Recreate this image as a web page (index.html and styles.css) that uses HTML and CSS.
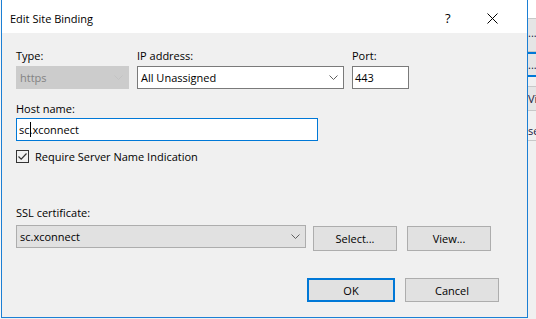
FILE: index.html
```html
<!DOCTYPE html>
<html lang="en">
<head>
    <meta charset="UTF-8">
    <title>Edit Site Binding</title>
    <link rel="stylesheet" href="styles.css">
</head>
<body>
    <div class="screen">
        <div class="edge"></div>

        <!-- Dialog -->
        <div class="dialog">
            <div class="titlebar">
                <span class="title">Edit Site Binding</span>
                <span class="help">?</span>
                <span class="close">
                    <svg width="11" height="11" viewBox="0 0 11 11"><path d="M0.5 0.5 L10.5 10.5 M10.5 0.5 L0.5 10.5" stroke="#000" stroke-width="1" fill="none"/></svg>
                </span>
            </div>

            <div class="content">
                <!-- Type / IP / Port -->
                <div class="top-row">
                    <div class="field">
                        <label class="label">Type:</label>
                        <div class="combo disabled">
                            <span>https</span>
                            <svg class="chev" width="9" height="5" viewBox="0 0 9 5"><path d="M0.5 0.5 L4.5 4.5 L8.5 0.5" stroke="#c3c3c3" fill="none"/></svg>
                        </div>
                    </div>
                    <div class="field">
                        <label class="label">IP address:</label>
                        <div class="combo">
                            <span>All Unassigned</span>
                            <svg class="chev" width="9" height="5" viewBox="0 0 9 5"><path d="M0.5 0.5 L4.5 4.5 L8.5 0.5" stroke="#5f5f5f" fill="none"/></svg>
                        </div>
                    </div>
                    <div class="field">
                        <label class="label">Port:</label>
                        <div class="textbox">443</div>
                    </div>
                </div>

                <!-- Host name -->
                <div class="host">
                    <label class="label">Host name:</label>
                    <div class="textbox focused">sc<span class="caret"></span>.xconnect</div>
                </div>

                <div class="check-row">
                    <span class="checkbox">
                        <svg width="11" height="11" viewBox="0 0 11 11"><path d="M1.5 5.5 L4.2 8.2 L9.5 2.5" stroke="#333" stroke-width="1.2" fill="none"/></svg>
                    </span>
                    <span>Require Server Name Indication</span>
                </div>

                <!-- SSL certificate -->
                <div class="ssl">
                    <label class="label">SSL certificate:</label>
                    <div class="cert-row">
                        <div class="combo grey">
                            <span>sc.xconnect</span>
                            <svg class="chev" width="9" height="5" viewBox="0 0 9 5"><path d="M0.5 0.5 L4.5 4.5 L8.5 0.5" stroke="#5f5f5f" fill="none"/></svg>
                        </div>
                        <button class="btn btn-select">Select...</button>
                        <button class="btn btn-view">View...</button>
                    </div>
                </div>

                <div class="actions">
                    <button class="btn btn-ok">OK</button>
                    <button class="btn btn-cancel">Cancel</button>
                </div>
            </div>
        </div>

        <!-- Window behind the dialog -->
        <div class="side">
            <div class="side-top"></div>
            <div class="side-btn tall">...</div>
            <div class="side-btn active">...</div>
            <div class="side-btn blank"></div>
            <div class="side-btn">Vi</div>
            <div class="side-btn tall2">se</div>
        </div>
    </div>
</body>
</html>
```

FILE: styles.css
```css
/* General */
body {
    margin: 0;
    padding: 0;
    background-color: #ffffff;
    font-family: 'Open Sans', 'Noto Sans', sans-serif;
    font-size: 11px;
    color: #000;
    overflow: hidden;
}

.screen {
    display: flex;
    width: 536px;
    height: 319px;
    background-color: #f0f0f0;
}

.edge {
    width: 1px;
    flex-shrink: 0;
    background-color: #f7f7f7;
}

/* Dialog frame */
.dialog {
    width: 525px;
    height: 317px;
    flex-shrink: 0;
    border: 1px solid #1c7fd4;
    border-top: none;
    background-color: #f0f0f0;
    display: flex;
    flex-direction: column;
}

.titlebar {
    height: 33px;
    background-color: #ffffff;
    display: flex;
    align-items: center;
    padding-left: 8px;
    font-size: 11px;
}

.title {
    flex: 1;
    padding-top: 3px;
}

.help {
    width: 10px;
    margin-right: 32px;
    font-size: 13px;
    padding-top: 2px;
}

.close {
    width: 11px;
    margin-right: 29px;
    display: flex;
    padding-top: 3px;
}

.content {
    padding: 15px 0 0 14px;
}

.label {
    display: block;
    line-height: 16px;
    margin-bottom: 2px;
}

/* Top row */
.top-row {
    display: grid;
    grid-template-columns: 113px 207px 57px;
    column-gap: 8px;
}

.combo, .textbox {
    height: 21px;
    border: 1px solid #7a7a7a;
    background-color: #fff;
    display: flex;
    align-items: center;
    padding: 0 0 0 3px;
    box-sizing: content-box;
}

.combo span {
    flex: 1;
}

.combo .chev {
    margin-right: 5px;
}

.combo.disabled {
    background-color: #cccccc;
    border-color: #cccccc;
    color: #838383;
}

.combo.grey {
    background-color: #e1e1e1;
    border-color: #adadad;
}

.textbox {
    padding-left: 2px;
}

/* Host name */
.host {
    margin-top: 12px;
    width: 302px;
}

.host .label {
    margin-bottom: 1px;
}

.textbox.focused {
    border-color: #0078d7;
}

.caret {
    display: inline-block;
    width: 1px;
    height: 15px;
    background-color: #000;
    vertical-align: middle;
    margin-right: -1px;
}

.check-row {
    display: flex;
    align-items: center;
    margin-top: 9px;
    height: 13px;
}

.checkbox {
    width: 11px;
    height: 11px;
    border: 1px solid #333;
    margin-right: 6px;
    display: flex;
}

/* SSL certificate */
.ssl {
    margin-top: 42px;
}

.ssl .label {
    margin-bottom: 4px;
}

.cert-row {
    display: flex;
    align-items: flex-start;
}

.cert-row .combo {
    width: 285px;
}

.btn {
    font-family: inherit;
    font-size: 11px;
    background-color: #e1e1e1;
    border: 1px solid #adadad;
    padding: 0;
    color: #000;
    height: 25px;
}

.btn-select {
    width: 84px;
    margin: 1px 0 0 7px;
}

.btn-view {
    width: 84px;
    margin: 1px 0 0 10px;
}

/* Bottom buttons */
.actions {
    display: flex;
    justify-content: flex-end;
    padding-right: 28px;
    margin-top: 27px;
    gap: 10px;
}

.btn-ok {
    width: 88px;
    height: 24px;
    border: 2px solid #0078d7;
}

.btn-cancel {
    width: 94px;
    height: 24px;
}

/* Window behind */
.side {
    flex: 1;
    min-width: 0;
    display: flex;
    flex-direction: column;
    background-color: #f0f0f0;
    font-size: 11px;
}

.side-top {
    height: 18px;
    background-color: #ffffff;
    border-bottom: 1px solid #c8c8c8;
}

.side-btn {
    height: 23px;
    line-height: 23px;
    background-color: #e5e5e5;
    border-bottom: 1px solid #c8c8c8;
    overflow: hidden;
    white-space: nowrap;
    color: #1a1a40;
}

.side-btn.tall {
    height: 32px;
    line-height: 28px;
}

.side-btn.active {
    height: 21px;
    line-height: 21px;
    border-bottom: 2px solid #0078d7;
    border-top: 2px solid #0078d7;
}

.side-btn.blank {
    height: 9px;
    background-color: #f0f0f0;
}

.side-btn.tall2 {
    height: 29px;
    line-height: 40px;
    background-color: #f0f0f0;
}
```
